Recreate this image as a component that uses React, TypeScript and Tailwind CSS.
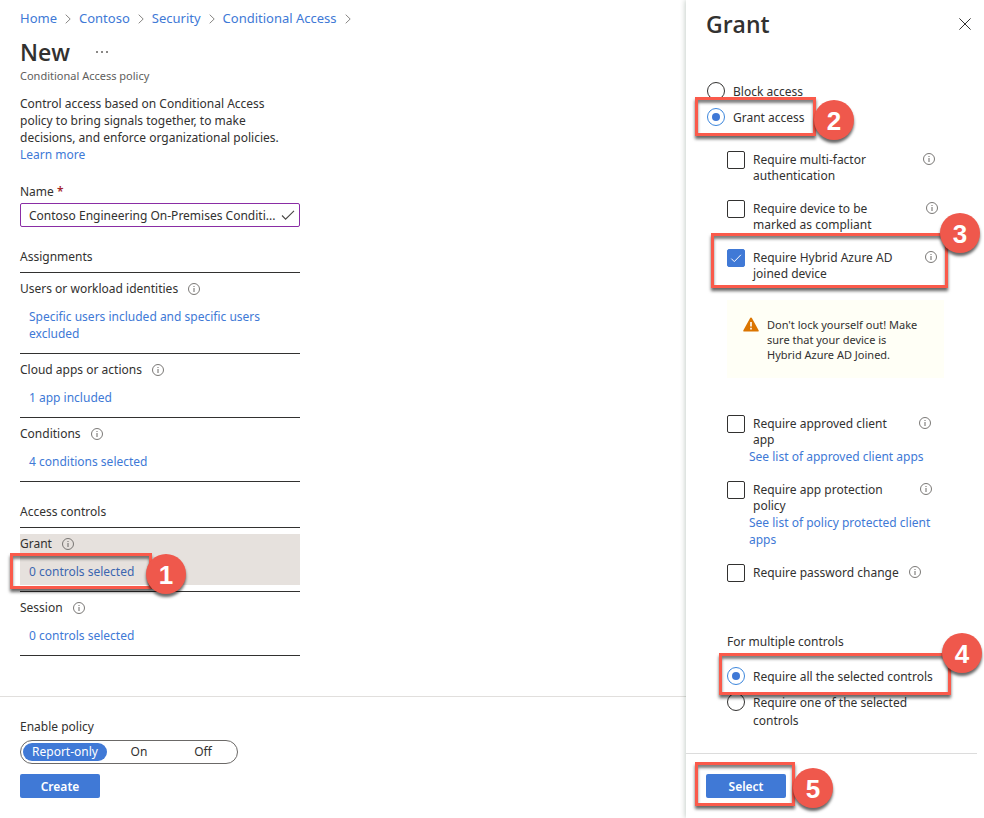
import React from "react";

function InfoIcon() {
  return (
    <svg aria-hidden="true" className="size-3 shrink-0" viewBox="0 0 12 12" fill="none">
      <circle cx="6" cy="6" r="5.5" stroke="#6b6967" strokeWidth="0.9" />
      <path d="M6 5v4M6 3v1" stroke="#6b6967" strokeWidth="1" />
    </svg>
  );
}

function Chevron() {
  return (
    <svg aria-hidden="true" className="mt-[2px] h-[10px] w-[6px]" viewBox="0 0 6 10" fill="none">
      <path d="M0.7 0.7 5.2 5 0.7 9.3" stroke="#7a7876" strokeWidth="0.9" />
    </svg>
  );
}

function Callout({ frame, badge, n }: { frame: string; badge: string; n: number }) {
  return (
    <>
      <span
        aria-hidden="true"
        className={`pointer-events-none absolute z-10 border-[3px] border-[#fa5a4b] shadow-[0_3px_3px_rgba(0,0,0,0.6),inset_0_3px_3px_rgba(0,0,0,0.5)] ${frame}`}
      />
      <span
        className={`pointer-events-none absolute z-20 flex size-10 items-center justify-center rounded-full bg-[#ef584c] pt-[2px] font-['Liberation_Sans',sans-serif] text-[26px] leading-none font-bold text-white shadow-[0_3px_3px_rgba(0,0,0,0.6)] ${badge}`}
      >
        {n}
      </span>
    </>
  );
}

function PolicyRow({
  label,
  value,
  active = false,
  children,
}: {
  label: string;
  value: string;
  active?: boolean;
  children?: React.ReactNode;
}) {
  return (
    <div className="border-b border-[#323130] py-[6px]">
      <div className={`relative pt-px pb-[5px] ${active ? "bg-[#e6e1dd]" : ""}`}>
        <div className="flex items-center gap-[10px]">
          {label}
          <InfoIcon />
        </div>
        <a href="#" className={`mt-[11px] ml-[9px] block ${active ? "text-[#3c66b0]" : "text-[#4079d6]"}`}>
          {value}
        </a>
        {children}
      </div>
    </div>
  );
}

function Radio({
  name,
  label,
  checked = false,
  children,
}: {
  name: string;
  label: string;
  checked?: boolean;
  children?: React.ReactNode;
}) {
  return (
    <div className="relative h-[26px] py-1">
      <label className="flex gap-2 leading-[18px]">
        <input
          type="radio"
          name={name}
          defaultChecked={checked}
          className="relative size-[18px] shrink-0 appearance-none rounded-full border border-[#323130] before:absolute before:inset-1 before:rounded-full checked:border-[#3c86dc] checked:before:bg-[#4079d6]"
        />
        <span className="pt-px">{label}</span>
      </label>
      {children}
    </div>
  );
}

function Check({
  label,
  info,
  checked = false,
  link,
  children,
}: {
  label: string;
  info: string;
  checked?: boolean;
  link?: string;
  children?: React.ReactNode;
}) {
  return (
    <div className="relative">
      <div className="flex">
        <label className="flex gap-2">
          <span className="relative size-[18px] shrink-0">
            <input
              type="checkbox"
              defaultChecked={checked}
              className="peer block size-[18px] appearance-none rounded-[2px] border border-[#323130] checked:border-[#4079d6] checked:bg-[#4079d6]"
            />
            <svg
              aria-hidden="true"
              className="pointer-events-none absolute inset-0 hidden peer-checked:block"
              viewBox="0 0 18 18"
              fill="none"
            >
              <path d="m4.3 9.6 3 3 6.6-6.8" stroke="#fff" strokeWidth="1" />
            </svg>
          </span>
          <span className="w-[150px] pt-px leading-4">{label}</span>
        </label>
        <span className={`pt-[2px] ${info}`}>
          <InfoIcon />
        </span>
      </div>
      {link && (
        <a href="#" className="ml-[22px] block w-[200px] text-[#4079d6]">
          {link}
        </a>
      )}
      {children}
    </div>
  );
}

export default function App() {
  return (
    <div className="flex min-h-screen bg-white font-['Noto_Sans','Open_Sans',sans-serif] text-[12px] leading-[17px] text-[#323130]">
      <main className="flex min-w-0 flex-1 flex-col">
        <div className="px-5 pt-2">
          <nav aria-label="Breadcrumb" className="flex items-center gap-2 text-[13px] leading-5 text-[#4079d6]">
            <a href="#">Home</a>
            <Chevron />
            <a href="#">Contoso</a>
            <Chevron />
            <a href="#">Security</a>
            <Chevron />
            <a href="#">Conditional Access</a>
            <Chevron />
          </nav>
          <div className="mt-2 flex items-center gap-[26px]">
            <h1 className="font-['Open_Sans',sans-serif] text-[23px] leading-8 font-semibold">New</h1>
            <button type="button" aria-label="More" className="flex gap-[3px]">
              <span className="size-[2px] bg-[#8a8886]" />
              <span className="size-[2px] bg-[#8a8886]" />
              <span className="size-[2px] bg-[#8a8886]" />
            </button>
          </div>
          <p className="text-[11px] leading-4 text-[#605e5c]">Conditional Access policy</p>

          <div className="w-[280px]">
            <p className="mt-[11px] w-[270px]">
              Control access based on Conditional Access policy to bring signals together, to make decisions, and
              enforce organizational policies.
              <a href="#" className="block text-[#4079d6]">
                Learn more
              </a>
            </p>
            <label htmlFor="policy-name" className="mt-5 block">
              Name <span className="font-semibold text-[#a4262c]">*</span>
            </label>
            <div className="mt-[3px] flex h-6 items-center rounded-[2px] border border-[#8a2da5] pr-1 pl-2">
              <input
                id="policy-name"
                type="text"
                defaultValue="Contoso Engineering On-Premises Conditi..."
                className="min-w-0 flex-1 outline-none"
              />
              <svg aria-hidden="true" className="h-[10px] w-[14px] shrink-0" viewBox="0 0 14 10" fill="none">
                <path d="m1 5.500 3.600 3.600L13 0.800" stroke="#484644" strokeWidth="1.1" />
              </svg>
            </div>

            <h2 className="mt-[21px] border-b border-[#323130] pb-[7px]">Assignments</h2>
            <PolicyRow
              label="Users or workload identities"
              value="Specific users included and specific users excluded"
            />
            <PolicyRow label="Cloud apps or actions" value="1 app included" />
            <PolicyRow label="Conditions" value="4 conditions selected" />

            <h2 className="mt-[21px] border-b border-[#323130] pb-[7px]">Access controls</h2>
            <PolicyRow label="Grant" value="0 controls selected" active>
              <Callout frame="-left-[10px] top-[19px] h-9 w-[142px]" badge="left-[126px] top-5" n={1} />
            </PolicyRow>
            <PolicyRow label="Session" value="0 controls selected" />
          </div>
        </div>

        <footer className="mt-auto border-t border-[#e1dfdd] px-5 pt-[21px] pb-5">
          <fieldset>
            <legend>Enable policy</legend>
            <div className="mt-[5px] flex h-6 w-[218px] items-center rounded-full border border-[#6b6967] pl-[2px] text-center">
              <label className="w-[84px] rounded-full leading-[18px] has-checked:bg-[#4079d6] has-checked:text-white">
                <input type="radio" name="enable" defaultChecked className="sr-only" />
                Report-only
              </label>
              <label className="w-16 rounded-full leading-[18px] has-checked:bg-[#4079d6] has-checked:text-white">
                <input type="radio" name="enable" className="sr-only" />
                On
              </label>
              <label className="w-16 rounded-full leading-[18px] has-checked:bg-[#4079d6] has-checked:text-white">
                <input type="radio" name="enable" className="sr-only" />
                Off
              </label>
            </div>
          </fieldset>
          <button type="button" className="mt-[10px] h-6 w-20 rounded-[2px] bg-[#4079d6] font-semibold text-white">
            Create
          </button>
        </footer>
      </main>

      <aside className="flex w-[298px] shrink-0 flex-col pt-2 shadow-[-1px_0_5px_rgba(0,40,20,0.22)]">
        <div className="flex items-center justify-between pr-[13px] pl-5">
          <h2 className="font-['Open_Sans',sans-serif] text-[23px] leading-8 font-semibold">Grant</h2>
          <button type="button" aria-label="Close">
            <svg className="size-3" viewBox="0 0 12 12" fill="none">
              <path d="m0.4 0.4 11.2 11.2M11.6 0.4 0.4 11.6" stroke="#323130" strokeWidth="1" />
            </svg>
          </button>
        </div>

        <div className="mt-[38px] pl-[21px]">
          <Radio name="access" label="Block access" />
          <Radio name="access" label="Grant access" checked>
            <Callout frame="-left-3 -top-[7px] h-[39px] w-[121px]" badge="left-[107px] -top-1" n={2} />
          </Radio>
        </div>

        <div className="mt-[21px] flex flex-col gap-4 pl-[41px]">
          <Check label="Require multi-factor authentication" info="ml-5" />
          <Check label="Require device to be marked as compliant" info="ml-[23px]" />
          <Check label="Require Hybrid Azure AD joined device" info="ml-[22px]" checked>
            <Callout frame="-left-4 -top-4 h-[55px] w-[237px]" badge="left-[213px] -top-9" n={3} />
          </Check>
        </div>

        <div
          role="alert"
          className="mt-[18px] mr-10 ml-[41px] flex gap-2 bg-[#fffff6] pt-[17px] pr-3 pb-4 pl-4 text-[11px] leading-[15px]"
        >
          <svg aria-hidden="true" className="h-[15px] w-4 shrink-0" viewBox="0 0 16 15">
            <path
              d="M8 .5c.5 0 .8.3 1 .7l6.6 12c.4.7 0 1.3-.8 1.3H1.200c-.8 0-1.200-.6-.8-1.300L7 1.200c.2-.4.5-.7 1-.7Z"
              fill="#db7500"
            />
            <path d="M7.200 5h1.600v4.500H7.200zM7.200 10.800h1.600v1.600H7.200z" fill="#fff" />
          </svg>
          <p className="w-[153px]">Don't lock yourself out! Make sure that your device is Hybrid Azure AD Joined.</p>
        </div>

        <div className="mt-[37px] flex flex-col gap-4 pl-[41px]">
          <Check label="Require approved client app" info="ml-4" link="See list of approved client apps" />
          <Check
            label="Require app protection policy"
            info="ml-[17px]"
            link="See list of policy protected client apps"
          />
          <Check label="Require password change" info="ml-[6px]" />
        </div>

        <fieldset className="mt-[51px] pl-[41px]">
          <legend>For multiple controls</legend>
          <div className="mt-[13px] w-[220px]">
            <Radio name="multiple" label="Require all the selected controls" checked>
              <Callout frame="-left-2 -top-[10px] h-[42px] w-[232px]" badge="left-[215px] -top-[30px]" n={4} />
            </Radio>
            <Radio name="multiple" label="Require one of the selected controls" />
          </div>
        </fieldset>

        <footer className="mt-auto mr-[7px] border-t border-[#dcdcdc] pt-5 pb-5 pl-5">
          <div className="relative">
            <button type="button" className="block h-6 w-20 rounded-[2px] bg-[#4079d6] font-semibold text-white">
              Select
            </button>
            <Callout frame="-left-[11px] -top-3 h-11 w-[100px]" badge="left-[87px] -top-[6px]" n={5} />
          </div>
        </footer>
      </aside>
    </div>
  );
}
